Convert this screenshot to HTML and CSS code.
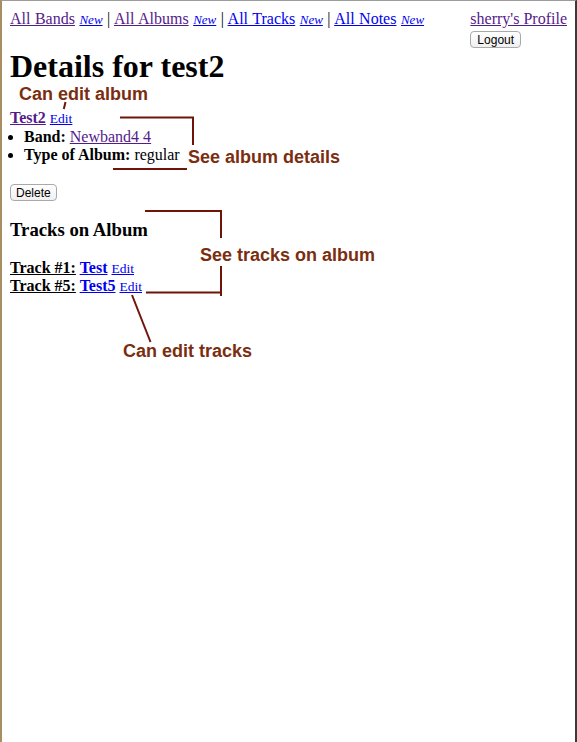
FILE: index.html
```html
<!DOCTYPE html>
<html>
<head>
<meta charset="utf-8">
<title>Details for test2</title>
<link rel="stylesheet" href="styles.css">
</head>
<body>
<div class="frame">
  <div class="account">
    <a class="visited" href="#">sherry's Profile</a>
    <button class="btn" type="button">Logout</button>
  </div>
  <div class="nav">
    <a class="visited" href="#">All Bands</a> <a class="new" href="#">New</a> | <a class="visited" href="#">All Albums</a> <a class="new" href="#">New</a> | <a href="#">All Tracks</a> <a class="new" href="#">New</a> | <a href="#">All Notes</a> <a class="new" href="#">New</a>
  </div>
  <h1 class="title">Details for test2</h1>
  <div class="album-line"><a class="visited strong" href="#">Test2</a> <a class="small" href="#">Edit</a></div>
  <ul class="details">
    <li><b>Band:</b> <a class="visited" href="#">Newband4 4</a></li>
    <li><b>Type of Album:</b> regular</li>
  </ul>
  <form class="del-form"><button class="btn" type="button">Delete</button></form>
  <h3 class="tracks-title">Tracks on Album</h3>
  <div class="track"><span class="track-num">Track #1:</span> <a class="strong" href="#">Test</a> <a class="small" href="#">Edit</a></div>
  <div class="track"><span class="track-num">Track #5:</span> <a class="strong" href="#">Test5</a> <a class="small" href="#">Edit</a></div>
</div>

<div class="overlay">
  <svg class="lines" width="577" height="742" viewBox="0 0 577 742">
    <g stroke="#6f1409" stroke-width="2" fill="none">
      <path d="M65.5 102 L63.8 109"/>
      <path d="M120 117.5 H194"/>
      <path d="M193 117 V145"/>
      <path d="M113 169 H187"/>
      <path d="M145 211 H222"/>
      <path d="M221 210 V238"/>
      <path d="M221 266 V296"/>
      <path d="M146 292.5 H221"/>
      <path d="M132 295 L150.5 342"/>
    </g>
  </svg>
  <div class="note note-album">Can edit album</div>
  <div class="note note-details">See album details</div>
  <div class="note note-tracks">See tracks on album</div>
  <div class="note note-edit-tracks">Can edit tracks</div>
</div>
</body>
</html>
```

FILE: styles.css
```css
html, body {
  margin: 0;
  padding: 0;
  background: #fff;
}
body {
  position: relative;
  width: 577px;
  height: 742px;
  overflow: hidden;
  font-family: "Liberation Serif", "Times New Roman", serif;
  font-size: 16px;
  line-height: 18px;
  color: #000;
}
.frame {
  box-sizing: border-box;
  width: 577px;
  height: 742px;
  border-top: 1px solid #9c9c9c;
  border-left: 2px solid #a68e62;
  border-right: 2px solid #3a3a3a;
  padding: 8px;
}
a {
  color: #0000ee;
  text-decoration: underline;
}
a.visited {
  color: #551a8b;
}
.nav {
  height: 18px;
  padding-top: 1px;
  word-spacing: 0.5px;
}
.new {
  font-size: 13px;
  font-style: italic;
}
.account {
  float: right;
  display: flex;
  flex-direction: column;
  align-items: flex-start;
  gap: 3px;
  padding-top: 1px;
}
.btn {
  font-family: "Liberation Sans", Arial, sans-serif;
  font-size: 12px;
  line-height: 14px;
  height: 17px;
  padding: 0 6px;
  margin: 0;
  color: #000;
  background: linear-gradient(#ffffff, #f0f0f0);
  border: 1px solid #a9a9a9;
  border-radius: 4px;
}
.title {
  font-size: 32px;
  line-height: 37px;
  font-weight: bold;
  margin: 20px 0 24px 0;
}
.strong {
  font-weight: bold;
}
.small {
  font-size: 13.5px;
}
.details {
  margin: 0;
  padding-left: 14px;
}
.del-form {
  margin: 20px 0 0 0;
  display: flex;
}
.del-form .btn {
  padding: 0 5px;
  height: 17px;
}
.tracks-title {
  font-size: 18.72px;
  line-height: 22px;
  font-weight: bold;
  margin: 18px 0 18px 0;
}
.track {
  font-weight: bold;
  line-height: 17px;
}
.track .small {
  font-weight: normal;
}
.track-num {
  text-decoration: underline;
}
.overlay {
  position: absolute;
  left: 0;
  top: 0;
  width: 577px;
  height: 742px;
  pointer-events: none;
}
.lines {
  position: absolute;
  left: 0;
  top: 0;
}
.note {
  position: absolute;
  font-family: "Liberation Sans", Arial, sans-serif;
  font-weight: bold;
  font-size: 18px;
  line-height: 14px;
  color: #7a2e0f;
  white-space: nowrap;
}
.note-album { left: 19px; top: 87px; }
.note-details { left: 188px; top: 150px; }
.note-tracks { left: 200px; top: 248px; }
.note-edit-tracks { left: 123px; top: 344px; }
```
